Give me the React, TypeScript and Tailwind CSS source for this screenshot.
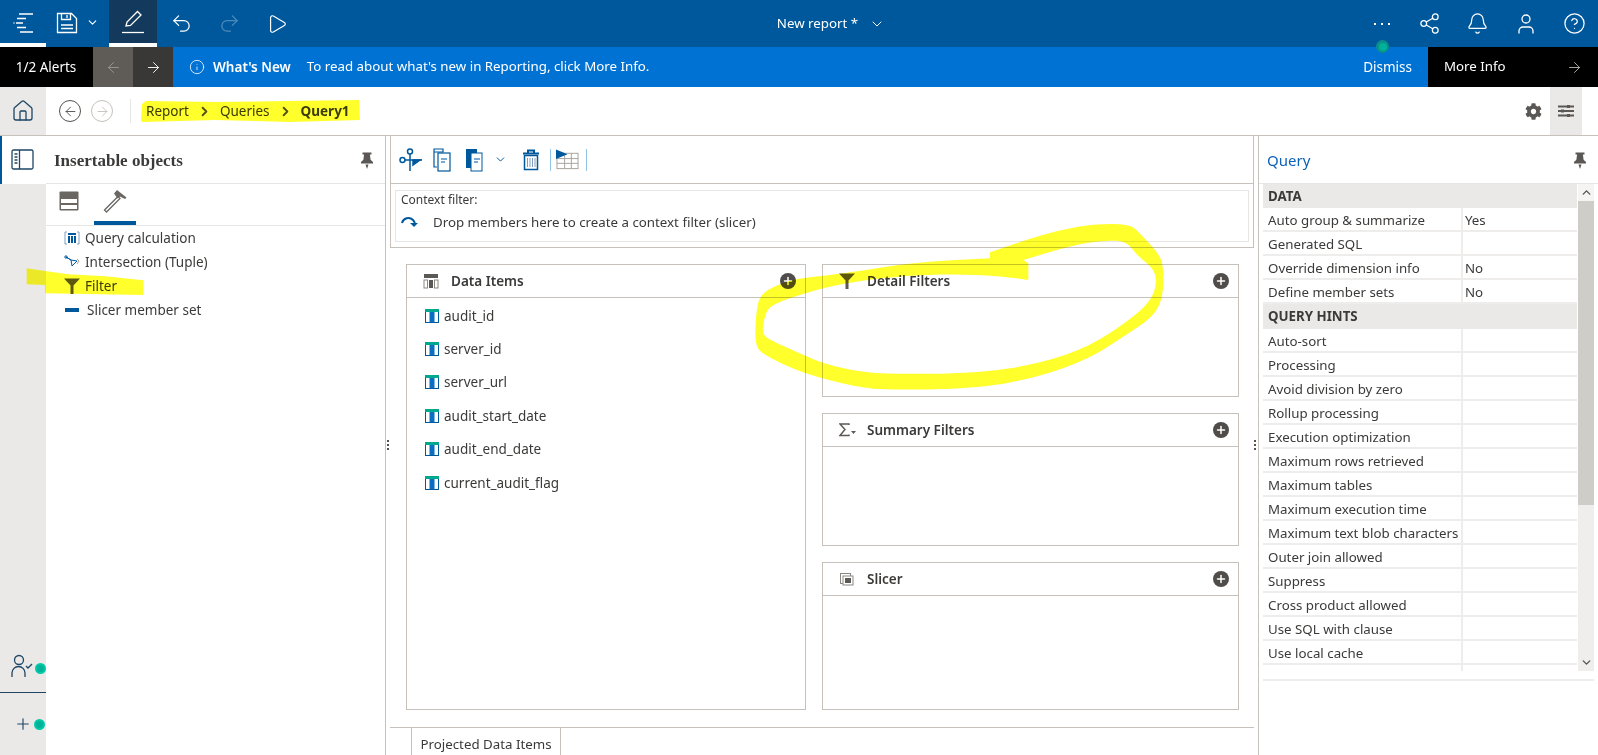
import { ArrowLeft, ArrowRight, Bell, ChevronDown, ChevronRight, CircleHelp, House, Info, Play, Plus, Redo2, Share2, Undo2, User } from "lucide-react"
import { FaCog } from "react-icons/fa"
import type { ReactNode } from "react"

const DATA_ITEMS = ["audit_id", "server_id", "server_url", "audit_start_date", "audit_end_date", "current_audit_flag"]

const HINTS = [
    "Auto-sort",
    "Processing",
    "Avoid division by zero",
    "Rollup processing",
    "Execution optimization",
    "Maximum rows retrieved",
    "Maximum tables",
    "Maximum execution time",
    "Maximum text blob characters",
    "Outer join allowed",
    "Suppress",
    "Cross product allowed",
    "Use SQL with clause",
    "Use local cache",
    "",
]

// hand-traced edges of the highlighter ring, in 3x crop coordinates
const RING_OUTER = [[750, 157], [850, 122], [960, 90], [1060, 72], [1170, 72], [1200, 100], [1255, 160], [1270, 195], [1270, 290], [1240, 350], [1150, 410], [1050, 475], [900, 530], [720, 565], [450, 570], [350, 562], [190, 520], [70, 465], [45, 435], [47, 350], [58, 285], [110, 255], [170, 235], [300, 222], [520, 187], [750, 175]]
const RING_INNER = [[865, 240], [840, 235], [700, 222], [500, 225], [300, 250], [160, 290], [90, 318], [75, 345], [65, 400], [90, 420], [190, 465], [250, 490], [360, 517], [480, 522], [720, 520], [900, 490], [1050, 440], [1190, 345], [1240, 290], [1250, 240], [1240, 205], [1190, 165], [1160, 125], [1100, 120], [1000, 135], [850, 180]]

function smoothPath(points: number[][]) {
    let d = `M${points[0][0]} ${points[0][1]}`
    for (let i = 1; i < points.length - 1; i++) {
        const [x, y] = points[i]
        const [nx, ny] = points[i + 1]
        d += `Q${x} ${y} ${(x + nx) / 2} ${(y + ny) / 2}`
    }
    const last = points[points.length - 1]
    return `${d}L${last[0]} ${last[1]}`
}

function PinIcon() {
    return (
        <svg width="14" height="18" viewBox="0 0 14 18" fill="#5a5754" className="mt-[3px]">
            <path d="M2.5 0.5h9v2h-1.6l.7 5.2 2.4 2.2v1.6H.98V9.900l2.4-2.2.7-5.200H2.500z" />
            <path d="M5.500 12.500h3L7 17z" />
        </svg>
    )
}

function FunnelIcon({ size = 16 }: { size?: number }) {
    return (
        <svg width={size} height={size} viewBox="0 0 16 16" fill="#5c5955">
            <path d="M0 0.500h16L9.500 7.500V16h-3V7.500z" />
        </svg>
    )
}

function ColumnIcon() {
    return (
        <svg width="14" height="14" viewBox="0 0 14 14">
            <rect x="0.500" y="0.500" width="13" height="13" fill="#fff" stroke="#00589c" />
            <rect x="0" y="0" width="14" height="3" fill="#00a88f" />
            <rect x="4.500" y="3" width="5" height="10" fill="#0a6fc0" />
        </svg>
    )
}

function TableHeadIcon() {
    return (
        <svg width="16" height="16" viewBox="0 0 16 16" fill="#5c5955">
            <rect x="1" y="1" width="14" height="4" />
            <rect x="1" y="7" width="3.500" height="8" fill="none" stroke="#8a8782" />
            <rect x="6" y="7" width="4" height="8" />
            <rect x="11.500" y="7" width="3.500" height="8" fill="none" stroke="#8a8782" />
        </svg>
    )
}

function SigmaIcon() {
    return (
        <svg width="18" height="14" viewBox="0 0 18 14" fill="none" stroke="#5c5955" strokeWidth="1.400">
            <path d="M10 2V1H1l5 5.500L1 12.500h9v-1" />
            <path d="M12 8h5l-2.500 3z" fill="#5c5955" stroke="none" />
        </svg>
    )
}

function SlicerIcon() {
    return (
        <svg width="16" height="14" viewBox="0 0 16 14" fill="none" stroke="#8a8782">
            <rect x="1.500" y="1.500" width="10" height="10" />
            <rect x="4" y="4" width="10" height="9" fill="#fff" />
            <rect x="6" y="6" width="6" height="5" fill="#5c5955" stroke="none" />
        </svg>
    )
}

function AddButton() {
    return (
        <span className="flex h-4 w-4 items-center justify-center rounded-full bg-[#4f4c49]">
            <Plus size={12} strokeWidth={3} color="#fff" />
        </span>
    )
}

function DropPanel({ title, icon, height, children }: { title: string; icon: ReactNode; height: string; children?: ReactNode }) {
    return (
        <div className={`border border-[#c6c2bb] ${height}`}>
            <div className="flex h-[33px] items-center border-b border-[#c6c2bb] pl-[16px] pr-[9px]">
                <span className="flex w-[28px] items-center">{icon}</span>
                <span className="text-[13.500px] font-semibold text-[#3b3a39]">{title}</span>
                <span className="ml-auto">
                    <AddButton />
                </span>
            </div>
            {children}
        </div>
    )
}

function StatusDot() {
    return <span className="h-[11px] w-[11px] shrink-0 rounded-full border-2 border-[#00c9a7] bg-[#00b398]" />
}

function Splitter() {
    return (
        <span className="flex flex-col gap-[2px]">
            <i className="h-[2px] w-[2px] bg-[#55524f]" />
            <i className="h-[2px] w-[2px] bg-[#55524f]" />
            <i className="h-[2px] w-[2px] bg-[#55524f]" />
        </span>
    )
}

function PropertyRow({ label, value }: { label: string; value?: string }) {
    return (
        <div className="flex h-[24px] border-b-2 border-[#eeedeb] text-[13.300px] leading-[25px] text-[#3b3a39]">
            <span className="w-[200px] shrink-0 overflow-hidden whitespace-nowrap border-r-2 border-[#eeedeb] pl-[5px]">{label}</span>
            <span className="pl-[2px]">{value}</span>
        </div>
    )
}

export default function App() {
    return (
        <div className="relative flex h-[755px] w-[1598px] flex-col overflow-hidden bg-white font-['Noto_Sans',sans-serif] text-[13.300px] text-[#3b3a39]">
            {/* app bar */}
            <header className="relative flex h-[47px] shrink-0 items-stretch bg-[#00589c] text-white">
                <div className="flex w-[46px] items-center justify-center border-b-4 border-white">
                    <svg width="24" height="24" viewBox="0 0 24 24" stroke="#fff" strokeWidth="1.500">
                        <path d="M8 4h14M6 8.500h9M2.500 13h1M5 13h7M6 17.500h9M9 22h13" />
                    </svg>
                </div>
                <div className="flex w-[63px] items-center justify-center gap-[8px] pb-[2px]">
                    <svg width="22" height="22" viewBox="0 0 22 22" fill="none" stroke="#fff" strokeWidth="1.300">
                        <path d="M1.500 1.500h14l5 5v14h-19z" />
                        <path d="M5.500 1.500v6h9v-6M11 3v3M5 13h12M5 16.500h12" />
                    </svg>
                    <ChevronDown size={13} strokeWidth={2} />
                </div>
                <div className="flex w-[48px] items-center justify-center border-b-4 border-white bg-[#133a5c]">
                    <svg width="24" height="26" viewBox="0 0 24 26" fill="none" stroke="#fff" strokeWidth="1.300">
                        <path d="M5 17l1-4L16.500 2.500l3.500 3.500L9.500 16.500z" />
                        <path d="M1 23.500h22" />
                    </svg>
                </div>
                <div className="flex w-[48px] items-center justify-center"><Undo2 size={23} strokeWidth={1.300} /></div>
                <div className="flex w-[48px] items-center justify-center opacity-30"><Redo2 size={23} strokeWidth={1.300} /></div>
                <div className="flex w-[48px] items-center justify-center"><Play size={22} strokeWidth={1.300} /></div>
                <div className="flex flex-1 items-center justify-center gap-[11px] pr-[9px]">
                    <span>New report *</span>
                    <ChevronDown size={16} strokeWidth={1.500} />
                </div>
                <div className="flex items-center gap-[25px] pr-[12px]">
                    <span className="flex w-[23px] justify-center gap-[5px]">
                        <i className="h-[2px] w-[2px] bg-white" />
                        <i className="h-[2px] w-[2px] bg-white" />
                        <i className="h-[2px] w-[2px] bg-white" />
                    </span>
                    <Share2 size={23} strokeWidth={1.300} />
                    <Bell size={23} strokeWidth={1.300} />
                    <User size={24} strokeWidth={1.300} />
                    <CircleHelp size={23} strokeWidth={1.300} />
                </div>
            </header>

            {/* alert strip */}
            <div className="flex h-[40px] shrink-0 items-stretch text-white">
                <div className="flex w-[93px] items-center justify-center bg-black pr-[1px] text-[13.500px]">1/2 Alerts</div>
                <div className="flex w-[40px] items-center justify-center bg-[#5f5c57] text-[#9b9892]"><ArrowLeft size={17} strokeWidth={1.300} /></div>
                <div className="flex w-[40px] items-center justify-center bg-[#3a3836]"><ArrowRight size={17} strokeWidth={1.300} /></div>
                <div className="flex flex-1 items-center bg-[#0072d3] pl-[16px] pr-[16px]">
                    <Info size={16} strokeWidth={1.200} />
                    <span className="ml-[8px] text-[13.500px] font-semibold">What's New</span>
                    <span className="ml-[16px]">To read about what's new in Reporting, click More Info.</span>
                    <span className="ml-auto text-[13.500px]">Dismiss</span>
                </div>
                <div className="flex w-[170px] items-center justify-between bg-black pl-[16px] pr-[15px]">
                    <span>More Info</span>
                    <ArrowRight size={17} strokeWidth={1.200} color="#c6c2bb" />
                </div>
            </div>

            {/* breadcrumb row */}
            <div className="flex h-[49px] shrink-0 items-stretch border-b border-[#c6c2bb]">
                <div className="flex w-[46px] items-center justify-center bg-[#ebe9e7]">
                    <House size={24} strokeWidth={1.300} color="#1d4666" />
                </div>
                <div className="flex items-center pl-[13px]">
                    <span className="flex h-[22px] w-[22px] items-center justify-center rounded-full border-[1.500px] border-[#55524f]"><ArrowLeft size={15} strokeWidth={1.500} color="#55524f" /></span>
                    <span className="ml-[10px] flex h-[22px] w-[22px] items-center justify-center rounded-full border-[1.500px] border-[#c6c2bb]"><ArrowRight size={15} strokeWidth={1.500} color="#c6c2bb" /></span>
                    <span className="ml-[17px] h-[24px] w-px bg-[#e8e6e4]" />
                    <span className="ml-[15px] text-[13.500px]">Report</span>
                    <ChevronRight size={15} strokeWidth={3} color="#55524f" className="mx-[8px]" />
                    <span className="text-[13.500px]">Queries</span>
                    <ChevronRight size={15} strokeWidth={3} color="#55524f" className="mx-[8px]" />
                    <span className="text-[13.500px] font-bold">Query1</span>
                </div>
                <div className="ml-auto flex items-center pr-[16px]">
                    <FaCog size={17} color="#5a5754" className="mr-[8px]" />
                    <span className="flex h-full w-[32px] items-center justify-center bg-[#ebe9e7]">
                        <svg width="16" height="12" viewBox="0 0 16 12" fill="#5a5754">
                            <rect x="0" y="0.500" width="16" height="2" />
                            <rect x="0" y="5" width="16" height="2" />
                            <rect x="0" y="9.500" width="16" height="2" />
                            <rect x="9" y="0" width="3" height="3" />
                            <rect x="3" y="4.500" width="3" height="3" />
                            <rect x="9" y="9" width="3" height="3" />
                        </svg>
                    </span>
                </div>
            </div>

            <div className="flex min-h-0 flex-1">
                {/* left rail */}
                <aside className="flex w-[46px] shrink-0 flex-col bg-[#ebe9e7]">
                    <div className="flex h-[48px] items-center justify-center border-l-2 border-[#00589c] bg-white pr-[2px]">
                        <svg width="24" height="22" viewBox="0 0 24 22" fill="none" stroke="#1d4666" strokeWidth="1.300">
                            <rect x="1" y="1" width="21" height="19" rx="1.500" />
                            <path d="M8.500 1v19M3.500 5h3M3.500 8h3M3.500 11h3M3.500 14h3" />
                        </svg>
                    </div>
                    <div className="mt-auto flex h-[60px] items-center border-b border-[#1d4666] pl-[10px] pt-[12px]">
                        <svg width="24" height="24" viewBox="0 0 24 24" fill="none" stroke="#1d4666" strokeWidth="1.300" className="mr-[1px] mt-[-6px]">
                            <circle cx="9" cy="6" r="4.500" />
                            <path d="M2 23v-4a6.500 6.500 0 0 1 13 0v4M16 12l2 2 4-4" />
                        </svg>
                        <StatusDot />
                    </div>
                    <div className="flex h-[62px] items-center pl-[14px]">
                        <Plus size={18} strokeWidth={1.500} color="#1d4666" className="mr-[2px]" />
                        <StatusDot />
                    </div>
                </aside>

                {/* insertable objects */}
                <section className="flex w-[340px] shrink-0 flex-col border-r border-[#c6c2bb]">
                    <div className="flex h-[48px] shrink-0 items-center justify-between border-b border-[#e8e6e4] pl-[8px] pr-[11px]">
                        <span className="pt-[2px] font-['Liberation_Serif',serif] text-[17px] font-bold text-[#3b3a39]">Insertable objects</span>
                        <PinIcon />
                    </div>
                    <div className="flex h-[42px] shrink-0 border-b border-[#e8e6e4]">
                        <div className="w-[48px] pl-[13px] pt-[7px]">
                            <svg width="20" height="20" viewBox="0 0 20 20">
                                <rect x="0.500" y="0.500" width="19" height="19" rx="1" fill="#6a6763" />
                                <rect x="2" y="8" width="16" height="4" fill="#fff" />
                                <rect x="2" y="14" width="16" height="4" fill="#fff" />
                            </svg>
                        </div>
                        <div className="flex w-[42px] items-start justify-center border-b-4 border-[#00589c]">
                            <svg width="24" height="24" viewBox="0 0 24 24" className="mt-[5px]">
                                <path d="M1.500 21L15 7.500l2 2L3.500 23z" fill="#fff" stroke="#6a6763" strokeWidth="1.300" />
                                <path d="M11 4.500L14 1l9.500 7.500-1.500 1.500-5-2.500-2.500 2z" fill="#6a6763" />
                            </svg>
                        </div>
                    </div>
                    <ul className="text-[13.500px]">
                        <li className="flex h-[24px] items-center pl-[18px]">
                            <svg width="16" height="14" viewBox="0 0 16 14" fill="none" className="mr-[5px]">
                                <path d="M3 1H1v12h2M13 1h2v12h-2" stroke="#7f9fbd" />
                                <rect x="4" y="2" width="8" height="2" fill="#00589c" />
                                <rect x="4" y="5" width="2" height="7" fill="#00589c" />
                                <rect x="7" y="5" width="2" height="7" fill="#00589c" />
                                <rect x="10" y="5" width="2" height="7" fill="#00589c" />
                            </svg>
                            Query calculation
                        </li>
                        <li className="flex h-[24px] items-center pl-[18px]">
                            <svg width="16" height="14" viewBox="0 0 16 14" fill="none" stroke="#00589c" className="mr-[5px]">
                                <path d="M2 2l5 3 6 1-5 5-1-6z" />
                                <circle cx="2" cy="2" r="1.200" />
                                <path d="M13 4l2 2-2 3" stroke="#a5a29d" />
                            </svg>
                            Intersection (Tuple)
                        </li>
                        <li className="flex h-[24px] items-center pl-[18px]">
                            <span className="mr-[5px]"><FunnelIcon /></span>
                            Filter
                        </li>
                        <li className="flex h-[24px] items-center pl-[19px]">
                            <span className="mr-[8px] h-[4px] w-[14px] bg-[#00589c]" />
                            Slicer member set
                        </li>
                    </ul>
                </section>

                {/* query editor */}
                <main className="relative flex w-[868px] shrink-0 flex-col pl-[4px]">
                    <div className="border-x border-b border-[#c6c2bb]">
                        <div className="flex h-[48px] items-center border-b border-[#c6c2bb] text-[#00589c]">
                            <svg width="24" height="24" viewBox="0 0 24 24" fill="none" stroke="#00589c" strokeWidth="1.500" className="ml-[8px]">
                                <circle cx="3.500" cy="12" r="2.500" />
                                <circle cx="11" cy="3.500" r="2.500" />
                                <path d="M6 12h17M11 6v17" />
                                <path d="M14 12l7 0-7 5z" fill="#00589c" />
                            </svg>
                            <svg width="18" height="24" viewBox="0 0 18 24" fill="none" stroke="#00589c" strokeWidth="1.200" className="ml-[10px]">
                                <path d="M1 1h9v3H1zM1 4v15h3" />
                                <rect x="5" y="5" width="12" height="18" fill="#fff" />
                                <path d="M8 11h6M8 14h4" stroke="#4c8fc7" strokeWidth="1.500" />
                            </svg>
                            <svg width="18" height="24" viewBox="0 0 18 24" fill="#00589c" className="ml-[14px]">
                                <rect x="1" y="1" width="11" height="19" />
                                <rect x="6" y="5" width="11" height="18" fill="#fff" stroke="#00589c" />
                                <path d="M9 11h6M9 14h4" stroke="#4c8fc7" strokeWidth="1.500" />
                            </svg>
                            <ChevronDown size={13} strokeWidth={1.800} className="ml-[11px]" />
                            <svg width="16" height="22" viewBox="0 0 16 22" fill="none" stroke="#00589c" className="ml-[16px]">
                                <path d="M0 4.500h16M5 4V1.500h6V4" strokeWidth="2" />
                                <rect x="1.500" y="6.500" width="13" height="14" strokeWidth="1.500" />
                                <path d="M4.500 9v9M7 9v9M9.500 9v9M12 9v9" stroke="#7f9fbd" />
                            </svg>
                            <span className="ml-[11px] h-[22px] w-px bg-[#8fc4e8]" />
                            <svg width="23" height="22" viewBox="0 0 24 22" fill="none" stroke="#a5a29d" className="ml-[5px]">
                                <rect x="1" y="4" width="22" height="16" />
                                <path d="M1 9.500h22M1 14.500h22M9 4v16M16 4v16" />
                                <path d="M0 0l12 5-12 5z" fill="#00589c" stroke="none" />
                            </svg>
                            <span className="ml-[7px] h-[22px] w-px bg-[#8fc4e8]" />
                        </div>
                        <div className="px-[4px] pb-[5px] pt-[6px]">
                            <div className="h-[52px] border border-[#e8e6e4] pl-[5px]">
                                <div className="pt-[1px] text-[12px] leading-[16px]">Context filter:</div>
                                <div className="mt-[4px] flex items-center leading-[20px]">
                                    <svg width="18" height="14" viewBox="0 0 18 14" fill="none" className="mr-[14px] shrink-0">
                                        <path d="M1 8a6.500 6.500 0 0 1 11-3l2 3" stroke="#00589c" strokeWidth="2" />
                                        <path d="M9 8h8l-4 4z" fill="#00589c" />
                                    </svg>
                                    Drop members here to create a context filter (slicer)
                                </div>
                            </div>
                        </div>
                    </div>

                    <div className="mt-[16px] flex gap-[16px] pl-[16px] pr-[15px]">
                        <DropPanel title="Data Items" icon={<TableHeadIcon />} height="h-[446px] w-[400px] shrink-0">
                            <ul className="pl-[18px] pt-[1px]">
                                {DATA_ITEMS.map(item => (
                                    <li key={item} className="flex h-[33.400px] items-center gap-[5px] text-[13.500px]">
                                        <ColumnIcon />
                                        {item}
                                    </li>
                                ))}
                            </ul>
                        </DropPanel>
                        <div className="flex flex-1 flex-col gap-[16px]">
                            <DropPanel title="Detail Filters" icon={<FunnelIcon />} height="h-[133px]" />
                            <DropPanel title="Summary Filters" icon={<SigmaIcon />} height="h-[133px]" />
                            <DropPanel title="Slicer" icon={<SlicerIcon />} height="h-[148px]" />
                        </div>
                    </div>

                    <div className="mt-[17px] flex flex-1 items-stretch">
                        <span className="w-[21px] border-t border-[#c6c2bb]" />
                        <span className="w-[150px] border-x border-t border-[#c6c2bb] pt-[7px] text-center">Projected Data Items</span>
                        <span className="flex-1 border-t border-[#c6c2bb]" />
                    </div>

                    <span className="absolute left-[1px] top-[304px]"><Splitter /></span>
                    <span className="absolute right-[-2px] top-[304px]"><Splitter /></span>
                </main>

                {/* properties */}
                <aside className="ml-[4px] flex flex-1 flex-col border-l border-[#c6c2bb]">
                    <div className="flex h-[48px] shrink-0 items-center justify-between border-b border-[#e8e6e4] pl-[8px] pr-[11px]">
                        <span className="pt-[2px] text-[15px] text-[#0f62b5]">Query</span>
                        <PinIcon />
                    </div>
                    <div className="flex pl-[4px] pr-[4px]">
                        <div className="h-[487px] w-[314px] overflow-hidden">
                            <div className="flex h-[24px] items-center bg-[#ebe9e7] pl-[5px] pt-[1px] font-bold">DATA</div>
                            <PropertyRow label="Auto group & summarize" value="Yes" />
                            <PropertyRow label="Generated SQL" />
                            <PropertyRow label="Override dimension info" value="No" />
                            <PropertyRow label="Define member sets" value="No" />
                            <div className="flex h-[25px] items-center bg-[#ebe9e7] pl-[5px] pt-[1px] font-bold">QUERY HINTS</div>
                            {HINTS.map((hint, i) => (
                                <PropertyRow key={i} label={hint} />
                            ))}
                        </div>
                        <div className="ml-[1px] flex h-[487px] w-[16px] flex-col bg-[#efeeec]">
                            <div className="flex h-[17px] items-center justify-center bg-[#f5f4f3]"><ChevronDown size={13} strokeWidth={2.500} color="#55524f" className="rotate-180" /></div>
                            <div className="h-[304px] bg-[#cfcdc7]" />
                            <div className="mt-auto flex h-[17px] items-center justify-center"><ChevronDown size={13} strokeWidth={2.500} color="#55524f" /></div>
                        </div>
                    </div>
                    <div className="ml-[4px] mr-[4px] mt-[8px] border-t-2 border-[#eeedeb]" />
                </aside>
            </div>

            {/* sync dot over the app bar edge */}
            <span className="absolute left-[1376px] top-[40px] flex h-[13px] w-[13px] items-center justify-center rounded-full bg-[#0a8f8a]">
                <span className="h-[8px] w-[8px] rounded-full bg-[#00b398]" />
            </span>

            {/* highlighter marks drawn on the screenshot */}
            <svg className="pointer-events-none absolute left-0 top-[87px] mix-blend-multiply" width="400" height="48" viewBox="0 0 400 48">
                <path d="M142 17l4-3 70 1 70-1 73-1 1 20-70 2-75-2-73 2-1-2z" fill="#ffff2b" />
            </svg>
            <svg className="pointer-events-none absolute left-0 top-[130px] mix-blend-multiply" width="400" height="200" viewBox="0 0 1200 600">
                <path d="M80 415l55 8 70 10 110 6 115 12v44l-295-5v-25l-55-2z" fill="#ffff2b" />
            </svg>
            <svg className="pointer-events-none absolute left-[740px] top-[200px] mix-blend-multiply" width="500" height="220" viewBox="0 0 1500 660">
                <path
                    fillRule="evenodd"
                    fill="#ffff2b"
                    d={`${smoothPath(RING_OUTER)}Z ${smoothPath(RING_INNER)}L865 190Z`}
                />
            </svg>
        </div>
    )
}
